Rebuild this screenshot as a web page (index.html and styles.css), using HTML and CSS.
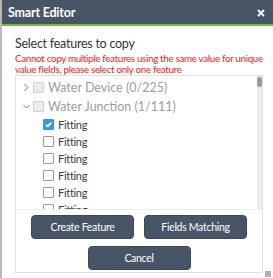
FILE: index.html
```html
<!DOCTYPE html>
<html lang="en">
  <head>
    <meta charset="UTF-8" />
    <title>Smart Editor</title>
    <link rel="stylesheet" href="styles.css">
  </head>
  <body>
    <div class="dialog">
      <div class="header">
        <div class="header-title">Smart Editor</div>
        <svg class="close" width="8" height="8" viewBox="0 0 8 8">
          <path d="M1 1 L7 7 M7 1 L1 7" stroke="#fff" stroke-width="1.8" />
        </svg>
      </div>

      <div class="body">
        <div class="heading">Select features to copy</div>
        <div class="warning">
          Cannot copy multiple features using the same value for unique<br />
          value fields, please select only one feature
        </div>

        <div class="panel">
          <div class="list-wrap">
            <div class="list">
              <div class="row layer">
                <svg class="chevron" width="7" height="9" viewBox="0 0 7 9">
                  <path d="M1.5 1 L5 4.5 L1.5 8" fill="none" stroke="#777" stroke-width="1" />
                </svg>
                <span class="box disabled"></span>
                <span class="label muted">Water Device (0/225)</span>
              </div>
              <div class="row layer">
                <svg class="chevron" width="7" height="9" viewBox="0 0 7 9">
                  <path d="M0.5 3 L3.5 6 L6.5 3" fill="none" stroke="#777" stroke-width="1" />
                </svg>
                <span class="box disabled"></span>
                <span class="label muted">Water Junction (1/111)</span>
              </div>
              <div class="row item">
                <span class="box checked">
                  <svg width="9" height="9" viewBox="0 0 9 9">
                    <path d="M1.8 4.6 L3.7 6.4 L7.4 2.6" fill="none" stroke="#fff" stroke-width="1.6" />
                  </svg>
                </span>
                <span class="label">Fitting</span>
              </div>
              <div class="row item"><span class="box"></span><span class="label">Fitting</span></div>
              <div class="row item"><span class="box"></span><span class="label">Fitting</span></div>
              <div class="row item"><span class="box"></span><span class="label">Fitting</span></div>
              <div class="row item"><span class="box"></span><span class="label">Fitting</span></div>
              <div class="row item"><span class="box"></span><span class="label">Fitting</span></div>
            </div>
            <div class="scrollbar">
              <div class="thumb"></div>
            </div>
          </div>

          <div class="actions">
            <div class="btn">Create Feature</div>
            <div class="btn">Fields Matching</div>
            <div class="btn">Cancel</div>
          </div>
        </div>
      </div>
      <div class="grip"></div>
    </div>
  </body>
</html>
```

FILE: styles.css
```css
* {
  box-sizing: border-box;
  margin: 0;
  padding: 0;
}

body {
  background: #b9b9b4;
  font-family: Lato, "Open Sans", sans-serif;
  width: 273px;
  height: 278px;
  overflow: hidden;
  padding-left: 2px;
}

.dialog {
  position: relative;
  height: 278px;
  background: #fff;
  display: flex;
  flex-direction: column;
}

.header {
  height: 26px;
  background: #485567;
  border-bottom: 2px solid #7ab547;
  display: flex;
  align-items: center;
  justify-content: space-between;
  padding: 0 8px 0 6px;
}

.header-title {
  color: #fff;
  font-size: 12.5px;
  font-weight: 700;
  letter-spacing: -0.2px;
}

.close {
  margin-top: 1px;
}

.body {
  flex: 1;
  padding: 10px 10px 0 13px;
  display: flex;
  flex-direction: column;
}

.heading {
  font-size: 12.5px;
  letter-spacing: -0.25px;
  color: #333;
  line-height: 16px;
}

.warning {
  font-size: 9.9px;
  letter-spacing: -0.35px;
  line-height: 11px;
  color: #f51c1c;
  margin-top: 1px;
  white-space: nowrap;
}

.panel {
  height: 198px;
  border: 1px solid #e2e2e2;
  display: flex;
  flex-direction: column;
}

.list-wrap {
  height: 134px;
  display: flex;
  border-bottom: 1px solid #efefef;
}

.list {
  flex: 1;
  overflow: hidden;
  padding-top: 2px;
}

.row {
  display: flex;
  align-items: center;
}

.row.layer {
  height: 19px;
  padding-left: 7px;
}

.row.item {
  height: 17px;
  padding-left: 27px;
}

.chevron {
  margin-right: 3px;
}

.box {
  width: 11px;
  height: 11px;
  border: 1px solid #9a9a9a;
  border-radius: 1px;
  background: #fff;
  display: flex;
  align-items: center;
  justify-content: center;
  margin-right: 4px;
}

.box.disabled {
  background: #ececec;
  border-color: #d0d0d0;
}

.box.checked {
  background: #3a96d6;
  border-color: #3a96d6;
}

.label {
  color: #3c3c3c;
  font-size: 11px;
  letter-spacing: -0.3px;
  line-height: 14px;
}

.label.muted {
  color: #9d9d9d;
  font-size: 12.5px;
  letter-spacing: 0;
}

.scrollbar {
  width: 5px;
  background: #ececec;
  padding-top: 1px;
}

.thumb {
  height: 10px;
  background: #9b9b9b;
  border-radius: 2px;
}

.actions {
  display: flex;
  flex-wrap: wrap;
  justify-content: center;
  gap: 7px 10px;
  padding-top: 5px;
}

.btn {
  width: 103px;
  height: 24px;
  background: #485567;
  border: 1px solid #3d4858;
  border-radius: 4px;
  color: #fff;
  font-size: 10.5px;
  letter-spacing: -0.3px;
  display: flex;
  align-items: center;
  justify-content: center;
}

.grip {
  position: absolute;
  right: 2px;
  bottom: 1px;
  width: 6px;
  height: 6px;
  background: radial-gradient(circle, #aaa 0.7px, transparent 0.8px) 0 0 / 2px 2px;
}
```
